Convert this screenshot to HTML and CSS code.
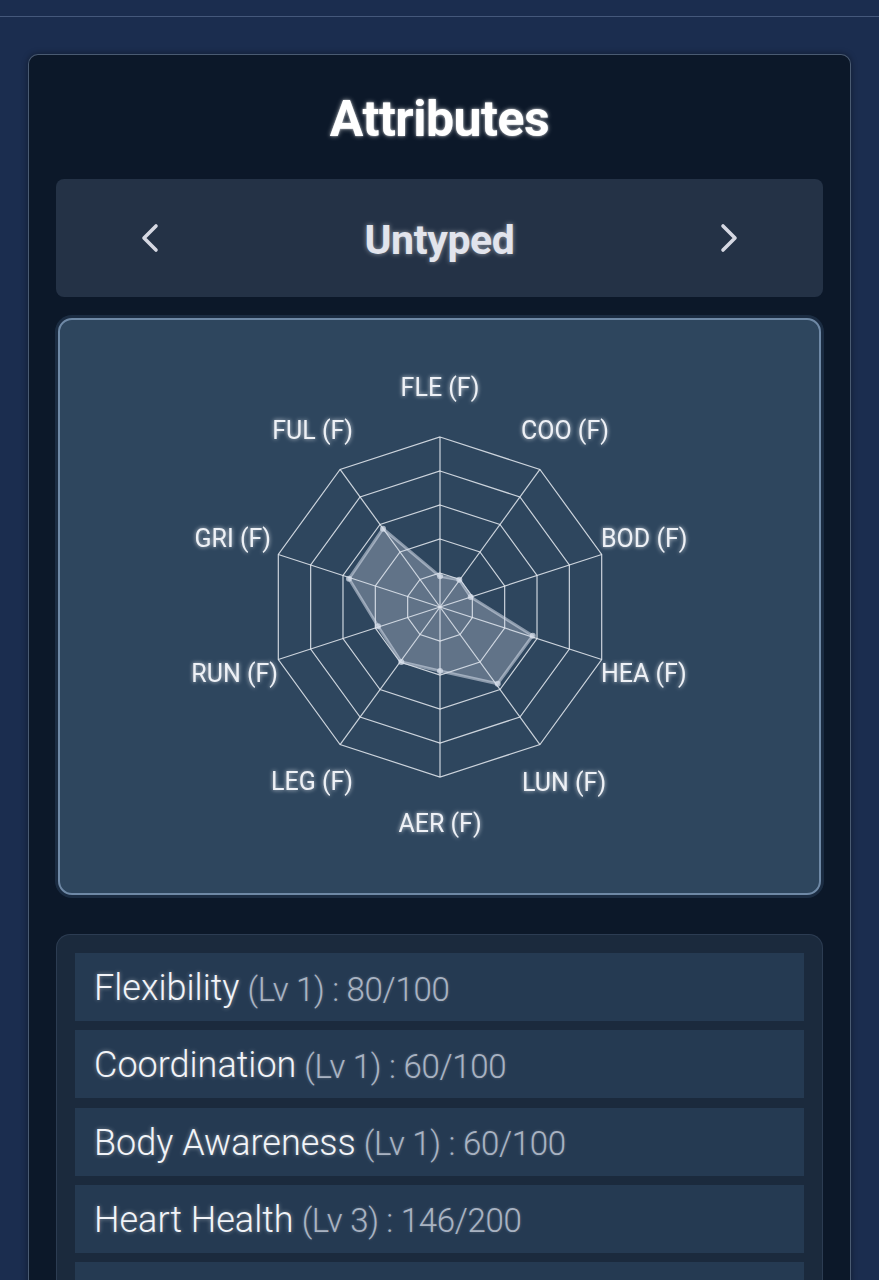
FILE: index.html
```html
<!DOCTYPE html>
<html lang="en">
<head>
<meta charset="utf-8">
<title>Attributes</title>
<link rel="stylesheet" href="styles.css">
</head>
<body>
<div class="topbar"></div>
<main class="panel">
  <h1 class="title">Attributes</h1>
  <div class="type-switch">
    <button class="nav-btn" aria-label="Previous">
      <svg width="20" height="30" viewBox="0 0 20 30"><path d="M16 3 L4 15 L16 27" fill="none" stroke="#d6d8e2" stroke-width="3.6" stroke-linecap="round" stroke-linejoin="round"/></svg>
    </button>
    <span class="type-name">Untyped</span>
    <button class="nav-btn" aria-label="Next">
      <svg width="20" height="30" viewBox="0 0 20 30"><path d="M4 3 L16 15 L4 27" fill="none" stroke="#d6d8e2" stroke-width="3.6" stroke-linecap="round" stroke-linejoin="round"/></svg>
    </button>
  </div>

  <section class="chart-card">
    <svg class="radar" width="560" height="500" viewBox="-280 -250 560 500">
      <defs>
        <filter id="glow" x="-20%" y="-40%" width="140%" height="180%">
          <feGaussianBlur in="SourceGraphic" stdDeviation="2" result="b"/>
          <feComponentTransfer in="b" result="bf">
            <feFuncA type="linear" slope="0.8"/>
          </feComponentTransfer>
          <feMerge><feMergeNode in="bf"/><feMergeNode in="SourceGraphic"/></feMerge>
        </filter>
      </defs>
      <g class="grid">
        <polygon points="0,-170 99.93,-137.53 161.69,-52.53 161.69,52.53 99.93,137.53 0,170 -99.93,137.53 -161.69,52.53 -161.69,-52.53 -99.93,-137.53"/>
        <polygon points="0,-136 79.94,-110.02 129.35,-42.02 129.35,42.02 79.94,110.02 0,136 -79.94,110.02 -129.35,42.02 -129.35,-42.02 -79.94,-110.02"/>
        <polygon points="0,-102 59.96,-82.52 97.01,-31.52 97.01,31.52 59.96,82.52 0,102 -59.96,82.52 -97.01,31.52 -97.01,-31.52 -59.96,-82.52"/>
        <polygon points="0,-68 39.97,-55.01 64.67,-21.01 64.67,21.01 39.97,55.01 0,68 -39.97,55.01 -64.67,21.01 -64.67,-21.01 -39.97,-55.01"/>
        <polygon points="0,-34 19.99,-27.51 32.34,-10.51 32.34,10.51 19.99,27.51 0,34 -19.99,27.51 -32.34,10.51 -32.34,-10.51 -19.99,-27.51"/>
        <line x1="0" y1="0" x2="0" y2="-170"/>
        <line x1="0" y1="0" x2="99.93" y2="-137.53"/>
        <line x1="0" y1="0" x2="161.69" y2="-52.53"/>
        <line x1="0" y1="0" x2="161.69" y2="52.53"/>
        <line x1="0" y1="0" x2="99.93" y2="137.53"/>
        <line x1="0" y1="0" x2="0" y2="170"/>
        <line x1="0" y1="0" x2="-99.93" y2="137.53"/>
        <line x1="0" y1="0" x2="-161.69" y2="52.53"/>
        <line x1="0" y1="0" x2="-161.69" y2="-52.53"/>
        <line x1="0" y1="0" x2="-99.93" y2="-137.53"/>
      </g>
      <polygon class="data" points="0,-30.7 19.3,-27.3 30.7,-10 92.7,28.7 57.7,76.7 0,64 -38.7,55 -62,19.3 -91,-28.3 -57,-78.3"/>
      <g class="pts">
        <circle cx="0" cy="-30.7" r="3"/>
        <circle cx="19.3" cy="-27.3" r="3"/>
        <circle cx="30.7" cy="-10" r="3"/>
        <circle cx="92.7" cy="28.7" r="3"/>
        <circle cx="57.7" cy="76.7" r="3"/>
        <circle cx="0" cy="64" r="3"/>
        <circle cx="-38.7" cy="55" r="3"/>
        <circle cx="-62" cy="19.3" r="3"/>
        <circle cx="-91" cy="-28.3" r="3"/>
        <circle cx="-57" cy="-78.3" r="3"/>
      </g>
      <g class="labels" filter="url(#glow)">
        <text x="0" y="-211" text-anchor="middle">FLE (F)</text>
        <text x="81" y="-168" text-anchor="start">COO (F)</text>
        <text x="161" y="-60" text-anchor="start">BOD (F)</text>
        <text x="161" y="75" text-anchor="start">HEA (F)</text>
        <text x="82" y="184" text-anchor="start">LUN (F)</text>
        <text x="0" y="225" text-anchor="middle">AER (F)</text>
        <text x="-87" y="183" text-anchor="end">LEG (F)</text>
        <text x="-162" y="75" text-anchor="end">RUN (F)</text>
        <text x="-169" y="-60" text-anchor="end">GRI (F)</text>
        <text x="-87" y="-168" text-anchor="end">FUL (F)</text>
      </g>
    </svg>
  </section>

  <section class="stats-card">
    <div class="stat-row"><span class="stat-name">Flexibility</span><span class="stat-meta">(Lv 1) : 80/100</span></div>
    <div class="stat-row"><span class="stat-name">Coordination</span><span class="stat-meta">(Lv 1) : 60/100</span></div>
    <div class="stat-row"><span class="stat-name">Body Awareness</span><span class="stat-meta">(Lv 1) : 60/100</span></div>
    <div class="stat-row"><span class="stat-name">Heart Health</span><span class="stat-meta">(Lv 3) : 146/200</span></div>
    <div class="stat-row"></div>
  </section>
</main>
</body>
</html>
```

FILE: styles.css
```css
* { box-sizing: border-box; }

html, body {
  margin: 0;
  padding: 0;
}

body {
  background: #1b2d4f;
  font-family: Roboto, "Noto Sans", "Liberation Sans", sans-serif;
  color: #eef0f5;
  height: 1280px;
  overflow: hidden;
}

.topbar {
  height: 17px;
  border-bottom: 1px solid rgba(150, 170, 205, 0.35);
}

.panel {
  margin: 37px 28px 0;
  background: #0c1829;
  border: 1px solid rgba(150, 172, 205, 0.45);
  border-radius: 10px;
  padding: 0 27px 40px;
  display: flex;
  flex-direction: column;
  box-shadow: 0 0 6px rgba(0, 0, 0, 0.4);
}

.title {
  margin: 0;
  height: 124px;
  display: flex;
  align-items: center;
  justify-content: center;
  padding-top: 4px;
  font-size: 50px;
  font-weight: 700;
  color: #ffffff;
  letter-spacing: -0.5px;
  text-shadow: 0 0 5px rgba(255, 255, 255, 0.55), 0 0 2px rgba(255, 255, 255, 0.6);
}

.type-switch {
  height: 118px;
  background: #243246;
  border-radius: 8px;
  display: flex;
  align-items: center;
  justify-content: space-between;
  padding: 0 84px 0 84px;
}

.nav-btn {
  background: none;
  border: 0;
  padding: 0;
  width: 20px;
  height: 30px;
  display: flex;
  align-items: center;
  justify-content: center;
}

.type-name {
  font-size: 41px;
  font-weight: 700;
  color: #e2e4ec;
  letter-spacing: -0.4px;
  text-shadow: 0 0 5px rgba(255, 255, 255, 0.5);
  padding-top: 4px;
}

.chart-card {
  margin: 21px 2px 0;
  height: 577px;
  background: #2e465e;
  border: 2px solid #6f89a6;
  border-radius: 14px;
  box-shadow: 0 0 0 3px rgba(40, 62, 88, 0.55);
  display: flex;
  align-items: center;
  justify-content: center;
}

.radar {
  display: block;
  overflow: visible;
}

.grid polygon,
.grid line {
  fill: none;
  stroke: rgba(232, 236, 242, 0.85);
  stroke-width: 1.2;
}

.data {
  fill: rgba(215, 222, 235, 0.3);
  stroke: rgba(215, 222, 235, 0.55);
  stroke-width: 3;
  stroke-linejoin: round;
}

.pts circle {
  fill: rgba(220, 226, 238, 0.7);
}

.labels text {
  font-family: Roboto, "Noto Sans", sans-serif;
  font-size: 25px;
  font-weight: 400;
  fill: #eef1f6;
}

.stats-card {
  margin-top: 39px;
  background: #1b2a3d;
  border: 1px solid rgba(120, 145, 175, 0.18);
  border-radius: 14px;
  padding: 18px 18px 18px;
  display: flex;
  flex-direction: column;
  gap: 9.3px;
}

.stat-row {
  height: 68px;
  background: #253a52;
  display: flex;
  align-items: center;
  gap: 8px;
  padding: 2px 0 0 19px;
}

.stat-name {
  font-size: 36px;
  font-weight: 300;
  color: #f2f4f8;
  letter-spacing: 0;
  text-shadow: 0 0 4px rgba(255, 255, 255, 0.45);
}

.stat-meta {
  font-size: 33px;
  font-weight: 300;
  color: #a9b3c2;
  letter-spacing: -0.3px;
  text-shadow: 0 0 3px rgba(255, 255, 255, 0.25);
  padding-top: 2px;
}
```
